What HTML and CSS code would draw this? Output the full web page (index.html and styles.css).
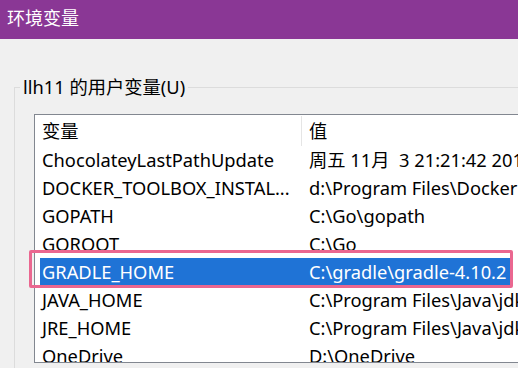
FILE: index.html
```html
<!DOCTYPE html>
<html lang="zh-CN">
<head>
<meta charset="utf-8">
<title>环境变量</title>
<link rel="stylesheet" href="styles.css">
</head>
<body>
<div class="titlebar"><span class="title">环境变量</span></div>
<div class="content">
  <fieldset class="group">
    <legend class="group-label">llh11 的用户变量(U)</legend>
    <div class="list">
      <div class="list-head">
        <div class="cell cell-name head-name">变量</div>
        <div class="cell cell-value">值</div>
      </div>
      <div class="row"><div class="cell cell-name">ChocolateyLastPathUpdate</div><div class="cell cell-value">周五 11月&nbsp; 3 21:21:42 2017</div></div>
      <div class="row"><div class="cell cell-name">DOCKER_TOOLBOX_INSTAL...</div><div class="cell cell-value">d:\Program Files\Docker Toolbox</div></div>
      <div class="row"><div class="cell cell-name">GOPATH</div><div class="cell cell-value">C:\Go\gopath</div></div>
      <div class="row"><div class="cell cell-name">GOROOT</div><div class="cell cell-value">C:\Go</div></div>
      <div class="row row-selected"><span class="mark"></span><div class="cell cell-name">GRADLE_HOME</div><div class="cell cell-value">C:\gradle\gradle-4.10.2</div></div>
      <div class="row"><div class="cell cell-name">JAVA_HOME</div><div class="cell cell-value">C:\Program Files\Java\jdk1.8.0</div></div>
      <div class="row"><div class="cell cell-name">JRE_HOME</div><div class="cell cell-value">C:\Program Files\Java\jdk1.8.0\jre</div></div>
      <div class="row"><div class="cell cell-name">OneDrive</div><div class="cell cell-value">D:\OneDrive</div></div>
    </div>
  </fieldset>
</div>
</body>
</html>
```
FILE: styles.css
```css
html, body {
  margin: 0;
  padding: 0;
}
body {
  width: 518px;
  height: 368px;
  overflow: hidden;
  background: #f0f0f0;
  font-family: "Noto Sans", "Noto Sans CJK SC", sans-serif;
  font-size: 18.3px;
  color: #000;
}
.titlebar {
  height: 39px;
  background: #8a3795;
  display: flex;
  align-items: center;
  padding-left: 7px;
}
.title {
  color: #fff;
  font-size: 18px;
  font-family: "Noto Sans CJK SC", sans-serif;
  line-height: 20px;
  margin-top: -6px;
}
.content {
  padding: 0;
}
.group {
  position: relative;
  margin: 38px 0 0 14px;
  padding: 0 0 0 5px;
  border: 1px solid #dcdcdc;
  width: 700px;
  height: 400px;
  box-sizing: border-box;
  min-width: 0;
}
.group-label {
  padding: 0 3px;
  line-height: 20px;
  font-size: 18.3px;
}
.list {
  margin: 17px 0 0 14px;
  height: 249px;
  width: 600px;
  box-sizing: border-box;
  border: 1px solid #828790;
  background: #fff;
  overflow: hidden;
  padding-left: 5px;
}
.list-head {
  display: grid;
  grid-template-columns: 262px 1fr;
  height: 31px;
  align-items: center;
}
.head-name {
  border-right: 1px solid #e5e5e5;
  height: 30px;
  display: flex;
  align-items: center;
  box-sizing: border-box;
}
.row {
  display: grid;
  grid-template-columns: 262px 1fr;
  height: 28px;
  align-items: center;
}
.cell {
  white-space: nowrap;
  overflow: hidden;
  line-height: 28px;
}
.cell-name {
  padding-left: 2px;
}
.cell-value {
  padding-left: 7px;
}
.row-selected {
  background: linear-gradient(#1f73d6, #1f73d6) no-repeat;
  background-size: 470px 100%;
  color: #fff;
}
/* annotation frame: its containing block is the group box, so the list does not clip it */
.mark {
  position: absolute;
  margin: -7px 0 0 -11px;
  width: 484px;
  height: 38px;
  box-sizing: border-box;
  border: 3px solid #ea6790;
  border-radius: 2px;
  pointer-events: none;
}
```
